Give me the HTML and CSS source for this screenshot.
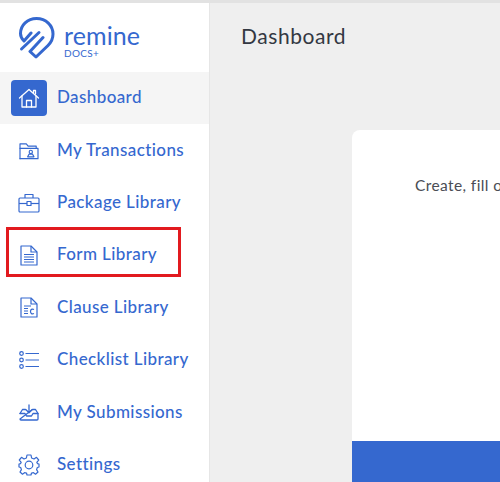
FILE: index.html
```html
<!DOCTYPE html>
<html lang="en">
<head>
<meta charset="utf-8">
<title>Dashboard</title>
<link rel="stylesheet" href="styles.css">
</head>
<body>
<div class="app">
  <aside class="sidebar">
    <div class="brand">
      <svg class="brand-mark" width="36" height="42" viewBox="0 0 36 42" fill="none" stroke="#3568cf" stroke-width="3" stroke-linecap="round" stroke-linejoin="round">
        <path d="M12 16 L5 24 C2.5 21.5 1.5 19 1.5 16.5 C1.5 8 8.5 1.5 17.5 1.5 C27 1.5 34 8.5 34 17 C34 21.5 32 25.5 29 28.5 L17 40 L11 34.5 L24 20.5"/>
        <path d="M2.5 32 L20 15.5"/>
      </svg>
      <div class="brand-text">
        <div class="brand-name">remine</div>
        <div class="brand-sub">DOCS+</div>
      </div>
    </div>
    <nav class="nav">
      <a class="nav-item active">
        <span class="nav-icon tile">
          <svg width="22" height="22" viewBox="0 0 22 22" fill="none" stroke="#fff" stroke-width="1.3" stroke-linejoin="round" stroke-linecap="round"><path d="M1.5 11 L11 2.5 L20.5 11"/><path d="M4 9 V20 H18 V9"/><path d="M8.5 20 V13.5 H13.5 V20"/><path d="M15.5 5.5 V3.5 H17.5 V7"/></svg>
        </span>
        <span class="nav-label">Dashboard</span>
      </a>
      <a class="nav-item">
        <span class="nav-icon">
          <svg width="20" height="18" viewBox="0 0 22 20" fill="none" stroke="#3568cf" stroke-width="1.3" stroke-linejoin="round" stroke-linecap="round"><path d="M1 18.5 V2 H8 L10 4.5 H19 V7"/><path d="M1 7 H21 V18.5 H1"/><circle cx="13" cy="11" r="1.8"/><path d="M9.5 16.5 L11 13.5 H15 L16.5 16.5 Z"/></svg>
        </span>
        <span class="nav-label">My Transactions</span>
      </a>
      <a class="nav-item">
        <span class="nav-icon">
          <svg width="22" height="20" viewBox="0 0 22 20" fill="none" stroke="#3568cf" stroke-width="1.2" stroke-linejoin="round"><rect x="1" y="5" width="20" height="14" rx="1"/><path d="M7 5 V1.5 H15 V5"/><path d="M1 10.5 H21"/><rect x="9" y="8.5" width="4" height="4" fill="#fff"/></svg>
        </span>
        <span class="nav-label">Package Library</span>
      </a>
      <a class="nav-item">
        <span class="nav-icon">
          <svg width="18" height="21" viewBox="0 0 18 21" fill="none" stroke="#3568cf" stroke-width="1.2" stroke-linejoin="round"><path d="M1 1 H11 L17 7 V20 H1 Z"/><path d="M11 1 V7 H17"/><path d="M4 9.5 H14 M4 12 H14 M4 14.5 H14 M4 17 H14"/></svg>
        </span>
        <span class="nav-label">Form Library</span>
      </a>
      <a class="nav-item">
        <span class="nav-icon">
          <svg width="18" height="21" viewBox="0 0 18 21" fill="none" stroke="#3568cf" stroke-width="1.2" stroke-linejoin="round"><path d="M1 1 H11 L17 7 V20 H1 Z"/><path d="M11 1 V7 H17"/><path d="M4 9 H11 M4 11.5 H8 M4 14 H8 M4 16.5 H8"/><path d="M14 12.5 C12 11.5 10.5 12.5 10.5 14.5 C10.5 16.5 12 17.5 14 16.5"/></svg>
        </span>
        <span class="nav-label">Clause Library</span>
      </a>
      <a class="nav-item">
        <span class="nav-icon">
          <svg width="20" height="18" viewBox="0 0 20 18" fill="none" stroke="#3568cf" stroke-width="1.2"><circle cx="2.5" cy="2.5" r="1.8"/><circle cx="2.5" cy="9" r="1.8"/><circle cx="2.5" cy="15.5" r="1.8"/><path d="M6.5 2.5 H20 M6.5 9 H20 M6.5 15.5 H20"/></svg>
        </span>
        <span class="nav-label">Checklist Library</span>
      </a>
      <a class="nav-item">
        <span class="nav-icon">
          <svg width="20" height="17" viewBox="0 0 20 17" fill="none" stroke="#3568cf" stroke-width="1.3" stroke-linejoin="round" stroke-linecap="round"><path d="M1 9.5 L3.5 5.5 H6.5 M13.5 5.5 H16.5 L19 9.5 V15 Q19 16 18 16 H2 Q1 16 1 15 Z"/><path d="M1 9.5 H6 L7.5 12 H12.5 L14 9.5 H19"/><path d="M10 1 V8.5 M7 5.8 L10 8.8 L13 5.8"/></svg>
        </span>
        <span class="nav-label">My Submissions</span>
      </a>
      <a class="nav-item">
        <span class="nav-icon">
          <svg width="22" height="22" viewBox="0 0 22 22" fill="none" stroke="#3568cf" stroke-width="1.2" stroke-linejoin="round"><circle cx="11" cy="11" r="3.8"/><path d="M9 1 H13 L13.6 4 L16 5 L18.5 3.3 L20.7 6 L18.8 8.3 L19.4 9.6 L21 10 V13 L19.3 13.5 L18.6 15.6 L20 18 L17.5 20.2 L15.5 18.6 L13.5 19 L13 21 H9 L8.5 19 L6.5 18.6 L4.5 20.2 L2 18 L3.4 15.6 L2.7 13.5 L1 13 V10 L2.6 9.6 L3.2 8.3 L1.3 6 L3.5 3.3 L6 5 L8.4 4 Z"/></svg>
        </span>
        <span class="nav-label">Settings</span>
      </a>
    </nav>
  </aside>
  <main class="main">
    <h1 class="title">Dashboard</h1>
    <section class="card">
      <p class="card-text">Create, fill out and submit forms</p>
      <div class="card-banner"></div>
    </section>
  </main>
  <div class="highlight"></div>
</div>
</body>
</html>
```

FILE: styles.css
```css
* {
  box-sizing: border-box;
}

html,
body {
  margin: 0;
  height: 100%;
  overflow: hidden;
}

body {
  font-family: "Lato", "Liberation Sans", sans-serif;
  background: #efefef;
}

.app {
  position: relative;
  display: flex;
  width: 500px;
  height: 482px;
  border-top: 3px solid #e2e2e2;
  overflow: hidden;
}

.sidebar {
  flex: 0 0 210px;
  background: #fff;
  border-right: 1px solid #e6e6e6;
}

.brand {
  display: flex;
  align-items: flex-start;
  height: 69px;
  padding: 14px 0 0 19px;
  gap: 9px;
}

.brand-mark {
  flex: none;
}

.brand-text {
  color: #3568cf;
}

.brand-name {
  font-size: 25px;
  line-height: 25px;
  margin-top: 6px;
  letter-spacing: 0.1px;
}

.brand-sub {
  font-size: 10px;
  line-height: 10px;
  letter-spacing: 0.3px;
}

.nav {
  display: flex;
  flex-direction: column;
}

.nav-item {
  display: flex;
  align-items: center;
  gap: 10px;
  height: 52.4px;
  padding-left: 11px;
  color: #3568cf;
}

.nav-item.active {
  background: #f5f5f5;
}

.nav-icon {
  flex: 0 0 36px;
  height: 36px;
  display: flex;
  align-items: center;
  justify-content: center;
}

.nav-icon.tile {
  background: #3568cf;
  border-radius: 4px;
}

.nav-label {
  font-size: 17px;
  font-weight: 500;
  line-height: 20px;
  letter-spacing: 0.4px;
  padding-bottom: 2px;
  white-space: nowrap;
}

.main {
  flex: 1;
  min-width: 0;
  display: flex;
  flex-direction: column;
}

.title {
  margin: 0;
  padding: 20px 0 0 31px;
  height: 127px;
  font-size: 21px;
  line-height: 26px;
  font-weight: 400;
  letter-spacing: 0.55px;
  color: #333842;
}

.card {
  flex: 1;
  display: flex;
  flex-direction: column;
  justify-content: space-between;
  margin-left: 142px;
  width: 400px;
  background: #fff;
  border-radius: 8px 8px 0 0;
  overflow: hidden;
}

.card-text {
  margin: 46px 0 0 63px;
  font-size: 15.5px;
  line-height: 18px;
  letter-spacing: 0.4px;
  color: #4a4d55;
  white-space: nowrap;
}

.card-banner {
  height: 41px;
  background: #3568cf;
}

.highlight {
  position: absolute;
  left: 6px;
  top: 224px;
  width: 175px;
  height: 50px;
  border: 3px solid #e21a1f;
}
```
